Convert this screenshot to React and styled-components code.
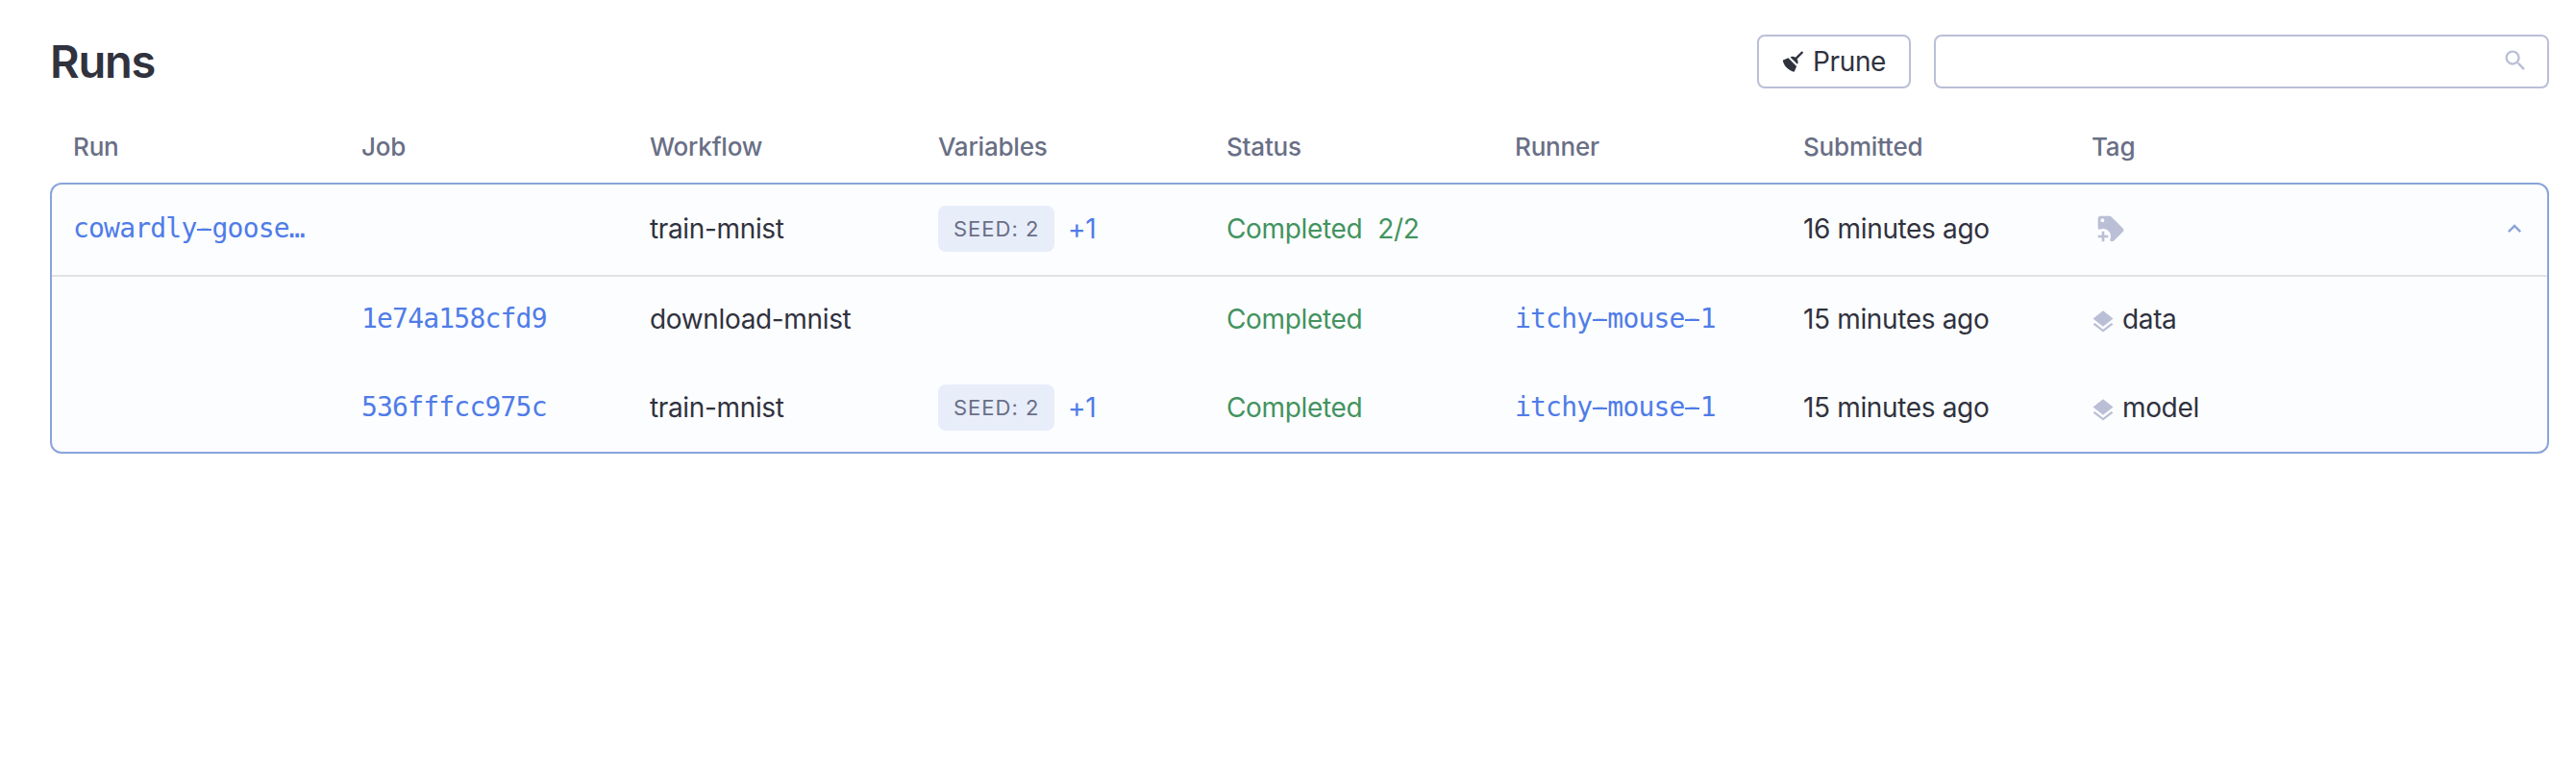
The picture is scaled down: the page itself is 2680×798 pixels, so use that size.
import React from "react";
import styled, { createGlobalStyle } from "styled-components";

const color = {
  text: "#30323e",
  muted: "#696f86",
  link: "#4f7ce8",
  success: "#43935f",
  icon: "#bbbfd6",
  outline: "#8aa4db",
  divider: "#e0e2e5",
  chip: "#e8edfa",
  panel: "#fcfdff",
};

const GlobalStyle = createGlobalStyle`
  * { box-sizing: border-box; }
  body {
    margin: 0;
    background: #fff;
    color: ${color.text};
    font-family: Inter, "Liberation Sans", sans-serif;
    font-size: 28px;
    line-height: 40px;
    letter-spacing: -0.35px;
  }
`;

const Page = styled.main`
  display: flex;
  flex-direction: column;
  min-height: 798px;
  padding: 36px 28px 0 52px;
`;

const Header = styled.header`
  display: flex;
  align-items: center;
  height: 56px;
  gap: 24px;
`;

const Title = styled.h1`
  margin: 0 auto 0 0;
  font-size: 47px;
  font-weight: 600;
  line-height: 56px;
  letter-spacing: -1.2px;
`;

const PruneButton = styled.button`
  display: flex;
  align-items: center;
  gap: 6px;
  width: 160px;
  height: 56px;
  padding: 0 0 0 22px;
  border: 2px solid ${color.icon};
  border-radius: 8px;
  background: #fff;
  color: ${color.text};
  font: inherit;
  letter-spacing: inherit;
`;

const SearchField = styled.label`
  display: flex;
  align-items: center;
  width: 640px;
  height: 56px;
  padding: 0 19px 3px 20px;
  border: 2px solid ${color.icon};
  border-radius: 8px;
`;

const SearchInput = styled.input`
  flex: 1;
  border: 0;
  outline: 0;
  background: transparent;
  font: inherit;
`;

const Icon = styled.svg`
  flex: none;
  display: block;
  width: ${(p) => p.$size || 28}px;
  height: ${(p) => p.$size || 28}px;
  fill: ${(p) => p.$color || color.icon};
`;

const columns = "repeat(8, 300px) 1fr";

const HeadRow = styled.div`
  display: grid;
  grid-template-columns: ${columns};
  align-items: center;
  height: 98px;
  padding: 24px 20px 1px 24px;
  color: ${color.muted};
  font-size: 26px;
  font-weight: 500;
  letter-spacing: -0.2px;
`;

const Group = styled.section`
  border: 2px solid ${color.outline};
  border-radius: 12px;
  background: ${color.panel};
  overflow: hidden;
`;

const Row = styled.div`
  display: grid;
  grid-template-columns: ${columns};
  align-items: center;
  height: 92px;
  padding: 0 20px 0 22px;
`;

const RunRow = styled(Row)`
  height: 96px;
  padding-bottom: 2px;
  border-bottom: 2px solid ${color.divider};
  & > :last-child { justify-content: flex-end; }
`;

const JobRow = styled(Row)`
  height: ${(p) => (p.$first ? 90 : 92)}px;
  padding-bottom: ${(p) => (p.$first ? 2 : 0)}px;
`;

const Cell = styled.div`
  display: flex;
  align-items: center;
  white-space: nowrap;
`;

const MonoLink = styled.a`
  color: ${color.link};
  font-family: "DejaVu Sans Mono", monospace;
  letter-spacing: -0.8px;
`;

/* Widens the hyphen to nearly the full monospace cell. */
const Dash = styled.span`
  background: linear-gradient(${color.link}, ${color.link}) no-repeat 0.5px 17px / 15px 2px;
`;

const Chip = styled.span`
  display: flex;
  align-items: center;
  width: 121px;
  height: 48px;
  padding-left: 16px;
  border-radius: 8px;
  background: ${color.chip};
  color: ${color.muted};
  font-size: 22px;
  letter-spacing: 1px;
`;

const More = styled.span`
  margin-left: 14px;
  color: ${color.link};
`;

const Status = styled.span`
  display: flex;
  gap: 16px;
  color: ${color.success};
`;

const TagLabel = styled.span`
  display: flex;
  align-items: center;
  gap: 6px;
  margin-left: -2px;
  & > svg { margin-top: 5px; }
`;

const AddTag = styled.span`
  margin-left: 4px;
`;

const paths = {
  broom:
    "M19.36,2.72L20.78,4.14L15.06,9.85C16.13,11.39 16.28,13.24 15.38,14.44L9.06,8.12C10.26,7.22 12.11,7.37 13.65,8.44L19.36,2.72M5.93,17.57C3.92,15.56 2.69,13.16 2.35,10.92L7.23,8.83L14.67,16.27L12.58,21.15C10.34,20.81 7.94,19.58 5.93,17.57Z",
  search:
    "M15.5 14h-.79l-.28-.27C15.41 12.59 16 11.11 16 9.5 16 5.91 13.09 3 9.5 3S3 5.91 3 9.5 5.91 16 9.5 16c1.61 0 3.09-.59 4.23-1.57l.27.28v.79l5 4.99L20.49 19l-4.99-5zm-6 0C7.01 14 5 11.99 5 9.5S7.01 5 9.5 5 14 7.01 14 9.5 11.99 14 9.5 14z",
  tagPlus:
    "M21.41,11.58L12.41,2.58C12.04,2.21 11.53,2 11,2H4A2,2 0 0,0 2,4V11C2,11.53 2.21,12.04 2.59,12.41L3,12.81C3.9,12.27 4.94,12 6,12A6,6 0 0,1 12,18C12,19.06 11.72,20.09 11.18,21L11.58,21.4C11.95,21.78 12.47,22 13,22C13.53,22 14.04,21.79 14.41,21.41L21.41,14.41C21.79,14.04 22,13.53 22,13C22,12.47 21.79,11.95 21.41,11.58M5.5,7A1.5,1.5 0 0,1 4,5.5A1.5,1.5 0 0,1 5.5,4A1.5,1.5 0 0,1 7,5.5A1.5,1.5 0 0,1 5.5,7M10,19H7V22H5V19H2V17H5V14H7V17H10V19Z",
  layers:
    "M11.99 18.54l-7.37-5.73L3 14.07l9 7 9-7-1.63-1.27-7.38 5.74zM12 16l7.36-5.73L21 9l-9-7-9 7 1.63 1.27L12 16z",
  chevronUp: "M12 8l-6 6 1.41 1.41L12 10.83l4.59 4.58L18 14z",
};

const Glyph = ({ name, size, fill }) => (
  <Icon viewBox="0 0 24 24" $size={size} $color={fill} aria-hidden="true">
    <path d={paths[name]} />
  </Icon>
);

const Mono = ({ children }) => (
  <MonoLink>
    {children.split(/(-)/).map((part, i) =>
      part === "-" ? <Dash key={i}>-</Dash> : part
    )}
  </MonoLink>
);

const Variables = () => (
  <>
    <Chip>SEED: 2</Chip>
    <More>+1</More>
  </>
);

const headings = ["Run", "Job", "Workflow", "Variables", "Status", "Runner", "Submitted", "Tag"];

const jobs = [
  { id: "1e74a158cfd9", workflow: "download-mnist", tag: "data" },
  { id: "536fffcc975c", workflow: "train-mnist", tag: "model", variables: true },
];

export default function App() {
  return (
    <>
      <GlobalStyle />
      <Page>
        <Header>
          <Title>Runs</Title>
          <PruneButton>
            <Glyph name="broom" fill={color.text} />
            Prune
          </PruneButton>
          <SearchField>
            <SearchInput aria-label="Search runs" />
            <Glyph name="search" />
          </SearchField>
        </Header>
        <HeadRow>
          {headings.map((h) => (
            <Cell key={h}>{h}</Cell>
          ))}
        </HeadRow>
        <Group>
          <RunRow>
            <Cell><Mono>cowardly-goose…</Mono></Cell>
            <Cell />
            <Cell>train-mnist</Cell>
            <Cell><Variables /></Cell>
            <Cell>
              <Status>
                <span>Completed</span>
                <span>2/2</span>
              </Status>
            </Cell>
            <Cell />
            <Cell>16 minutes ago</Cell>
            <Cell><AddTag><Glyph name="tagPlus" size={32} /></AddTag></Cell>
            <Cell><Glyph name="chevronUp" fill={color.outline} /></Cell>
          </RunRow>
          {jobs.map((job, i) => (
            <JobRow key={job.id} $first={i === 0}>
              <Cell />
              <Cell><Mono>{job.id}</Mono></Cell>
              <Cell>{job.workflow}</Cell>
              <Cell>{job.variables && <Variables />}</Cell>
              <Cell><Status>Completed</Status></Cell>
              <Cell><Mono>itchy-mouse-1</Mono></Cell>
              <Cell>15 minutes ago</Cell>
              <Cell>
                <TagLabel>
                  <Glyph name="layers" />
                  {job.tag}
                </TagLabel>
              </Cell>
            </JobRow>
          ))}
        </Group>
      </Page>
    </>
  );
}
